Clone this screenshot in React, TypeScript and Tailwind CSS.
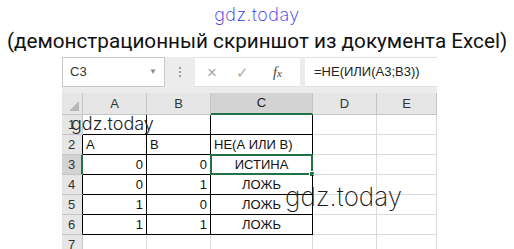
import React from "react";

const cols = ["A", "B", "C", "D", "E"];

type Cell = { text?: string; align?: "left" | "right" | "center"; black?: boolean };

// rows 1..7, columns A..E
const rows: Cell[][] = [
  [{ black: true }, { black: true }, { black: true }, {}, {}],
  [{ text: "A", black: true }, { text: "B", black: true }, { text: "НЕ(А ИЛИ В)", black: true }, {}, {}],
  [{ text: "0", align: "right", black: true }, { text: "0", align: "right", black: true }, { text: "ИСТИНА", align: "center", black: true }, {}, {}],
  [{ text: "0", align: "right", black: true }, { text: "1", align: "right", black: true }, { text: "ЛОЖЬ", align: "center", black: true }, {}, {}],
  [{ text: "1", align: "right", black: true }, { text: "0", align: "right", black: true }, { text: "ЛОЖЬ", align: "center", black: true }, {}, {}],
  [{ text: "1", align: "right", black: true }, { text: "1", align: "right", black: true }, { text: "ЛОЖЬ", align: "center", black: true }, {}, {}],
  [{}, {}, {}, {}, {}],
];

const alignClass = {
  left: "justify-start pl-[3px]",
  right: "justify-end pr-[3px]",
  center: "justify-center",
};

export default function App() {
  return (
    <div className="relative w-[514px] h-[249px] overflow-hidden bg-white font-['Liberation_Sans',sans-serif]">
      {/* site mark */}
      <div className="h-[27px] flex items-center justify-center pt-[2px]">
        <span className="font-['Inter',sans-serif] font-extralight text-[18px] leading-none tracking-[0.5px] text-[#3131e6]">gdz.today</span>
      </div>

      {/* caption */}
      <div className="h-[30px] text-center whitespace-nowrap font-['Roboto',sans-serif] text-[20.7px] leading-[28px] text-[#111]">
        (демонстрационный скриншот из документа Excel)
      </div>

      {/* excel */}
      <div className="ml-[62px] w-[375px]">
        {/* formula bar */}
        <div className="flex h-[36px] bg-[#ececec] pb-[6px]">
          <div className="w-[103px] flex items-center justify-between bg-white border border-[#c8c8c8] px-[7px] text-[13px] text-[#333]">
            <span>C3</span>
            <span className="text-[8px] text-[#888]">▼</span>
          </div>
          <div className="w-[30px] flex items-center justify-center">
            <div className="flex flex-col gap-[2px]">
              <span className="w-[2px] h-[2px] bg-[#9a9a9a]" />
              <span className="w-[2px] h-[2px] bg-[#9a9a9a]" />
              <span className="w-[2px] h-[2px] bg-[#9a9a9a]" />
            </div>
          </div>
          <div className="w-[105px] flex items-center bg-white border-y border-[#e0e0e0] text-[#a8a8a8]">
            <span className="w-[34px] text-center text-[17px] leading-none">×</span>
            <span className="w-[26px] text-center text-[15px] leading-none">✓</span>
            <span className="flex-1 text-center font-['Liberation_Serif',serif] italic text-[14px] text-[#444]">
              f<span className="text-[11px]">x</span>
            </span>
          </div>
          <div className="w-[5px]" />
          <div className="flex-1 flex items-center bg-white border-y border-[#e0e0e0] pl-[9px] text-[13px] text-[#222]">
            =НЕ(ИЛИ(A3;B3))
          </div>
        </div>

        {/* sheet */}
        <div className="grid grid-cols-[21px_64px_64px_102px_64px_60px] text-[13px]">
          {/* column headers */}
          <div className="relative h-[22px] bg-[#e6e6e6] border-r border-b border-[#c4c4c4]">
            <span className="absolute right-[3px] bottom-[3px] w-0 h-0 border-l-[10px] border-l-transparent border-b-[10px] border-b-[#b8b8b8]" />
          </div>
          {cols.map((c) =>
            c === "C" ? (
              <div key={c} className="h-[22px] flex items-center justify-center bg-[#d3d3d3] border-r border-[#c4c4c4] border-b-2 border-b-[#217346] text-[#222]">
                {c}
              </div>
            ) : (
              <div key={c} className="h-[22px] flex items-center justify-center bg-[#e6e6e6] border-r border-b border-[#c4c4c4] text-[#333]">
                {c}
              </div>
            )
          )}

          {rows.map((row, r) => (
            <React.Fragment key={r}>
              <div
                className={
                  r === 2
                    ? "h-[20px] flex items-center pl-[6px] bg-[#d3d3d3] border-b border-[#c4c4c4] border-r-2 border-r-[#217346] text-[#333]"
                    : r >= 1 && r <= 5
                    ? "h-[20px] flex items-center pl-[6px] bg-[#e6e6e6] border-b border-[#c4c4c4] border-r border-r-black text-[#333]"
                    : "h-[20px] flex items-center pl-[6px] bg-[#e6e6e6] border-b border-r border-[#c4c4c4] text-[#333]"
                }
              >
                {r + 1}
              </div>
              {row.map((cell, c) => (
                <div
                  key={c}
                  className={`relative h-[20px] flex items-center text-[#111] border-r border-b ${
                    cell.black ? "border-black" : "border-[#dadada]"
                  } ${alignClass[cell.align ?? "left"]}`}
                >
                  {cell.text}
                  {r === 2 && c === 2 && (
                    <span className="absolute -left-[1px] -top-[1px] -right-[1px] -bottom-[1px] border-2 border-[#217346]">
                      <span className="absolute -right-[4px] -bottom-[4px] w-[6px] h-[6px] bg-[#217346] border border-white" />
                    </span>
                  )}
                </div>
              ))}
            </React.Fragment>
          ))}
        </div>
      </div>

      {/* watermarks over the sheet */}
      <span className="absolute left-[71px] top-[115px] font-['Inter',sans-serif] font-light text-[18px] leading-none text-[#222]">
        gdz.today
      </span>
      <span className="absolute left-[285px] top-[184px] font-['Inter',sans-serif] font-extralight text-[26px] leading-none text-[#1a1a1a]">
        gdz.today
      </span>
    </div>
  );
}
